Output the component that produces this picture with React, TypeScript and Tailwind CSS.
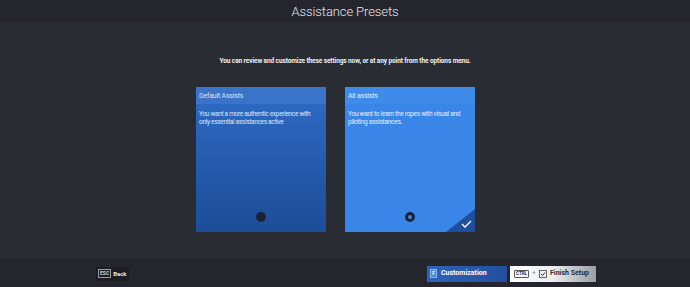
export default function App() {
  return (
    <div className="w-[690px] h-[287px] flex flex-col bg-[#2a2c34] text-white overflow-hidden" style={{ fontFamily: 'Roboto, "Liberation Sans", sans-serif' }}>
      {/* Title bar */}
      <div className="h-[23px] shrink-0 bg-[#24252d] flex items-center justify-center">
        <span className="text-[13px] font-light text-[#e4e6ea] tracking-[-0.1px]">Assistance Presets</span>
      </div>

      {/* Main */}
      <div className="flex-1 flex flex-col items-center">
        <p className="mt-[33px] text-[6.5px] font-bold text-[#f0f1f3] leading-[10px] tracking-[-0.1px]">
          You can review and customize these settings now, or at any point from the options menu.
        </p>

        <div className="mt-[21px] mr-[19px] flex gap-[19px]">
          {/* Default card */}
          <div className="w-[130px] h-[145px] flex flex-col bg-gradient-to-b from-[#2f6cc6] to-[#1c4d97]">
            <div className="h-[17px] shrink-0 bg-[#3a74c9] px-[3px] pt-[2px] flex items-center">
              <span className="text-[7px] text-[#d5e2f5] tracking-[-0.2px]">Default Assists</span>
            </div>
            <p className="px-[3px] mt-[6px] text-[6.6px] leading-[8px] text-[#dbe6f6] tracking-[-0.35px] whitespace-nowrap">
              You want a more authentic experience with
              <br />
              only essential assistances active
            </p>
            <div className="flex-1" />
            <div className="flex justify-center pb-[10px]">
              <div className="w-[10px] h-[10px] rounded-full bg-[#1b2332]" />
            </div>
          </div>

          {/* All assists card (selected) */}
          <div className="relative w-[130px] h-[145px] flex flex-col bg-[#3a86e8] overflow-hidden">
            <div className="h-[17px] shrink-0 bg-[#3f8bea] px-[3px] pt-[2px] flex items-center">
              <span className="text-[7px] text-[#e4eefc] tracking-[-0.2px]">All assists</span>
            </div>
            <p className="px-[3px] mt-[6px] text-[6.6px] leading-[8px] text-[#e4eefc] tracking-[-0.3px]">
              You want to learn the ropes with visual and piloting assistances.
            </p>
            <div className="flex-1" />
            <div className="flex justify-center pb-[10px]">
              <div className="w-[10px] h-[10px] rounded-full border-[3px] border-[#1b2332]" />
            </div>
            <svg className="absolute right-0 bottom-0" width="29" height="23" viewBox="0 0 29 23">
              <polygon points="29,0 29,23 0,23" fill="#1f4f9c" />
              <polyline points="16,15 19,18 25,12" fill="none" stroke="#ffffff" strokeWidth="1.3" />
            </svg>
          </div>
        </div>
      </div>

      {/* Footer */}
      <div className="h-[29px] shrink-0 bg-[#25262d] flex items-center pt-[2px] text-[7px] font-bold">
        <div className="ml-[96px] h-[14px] px-[2px] flex items-center gap-[2px] bg-[#1c1d23]">
          <span className="px-[1px] border border-[#9a9ca2] text-[#d0d2d6] text-[5px] leading-[7px]">ESC</span>
          <span className="text-[#e6e7ea] text-[6px]">Back</span>
        </div>
        <div className="flex-1" />
        <div className="h-[16px] w-[80px] flex items-center gap-[4px] px-[3px] bg-gradient-to-r from-[#2e63bb] to-[#214f9d]">
          <span className="w-[7px] h-[9px] flex items-center justify-center bg-[#4f85d6] border border-[#8fb2e6] text-[5px] text-white leading-none">F</span>
          <span className="text-white">Customization</span>
        </div>
        <div className="ml-[3px] mr-[94px] h-[16px] w-[86px] flex items-center gap-[3px] px-[4px] bg-gradient-to-r from-[#ffffff] via-[#eceef0] to-[#9a9da3] text-[#2a2c34]">
          <span className="px-[1px] border border-[#555] text-[4.5px] leading-[6px] rounded-[1px]">CTRL</span>
          <span className="text-[#888] font-normal">+</span>
          <svg width="8" height="8" viewBox="0 0 8 8">
            <rect x="0.5" y="0.5" width="7" height="7" fill="none" stroke="#444" strokeWidth="0.8" />
            <polyline points="2,4 3.5,5.5 6,2.5" fill="none" stroke="#222" strokeWidth="1" />
          </svg>
          <span>Finish Setup</span>
        </div>
      </div>
    </div>
  );
}
